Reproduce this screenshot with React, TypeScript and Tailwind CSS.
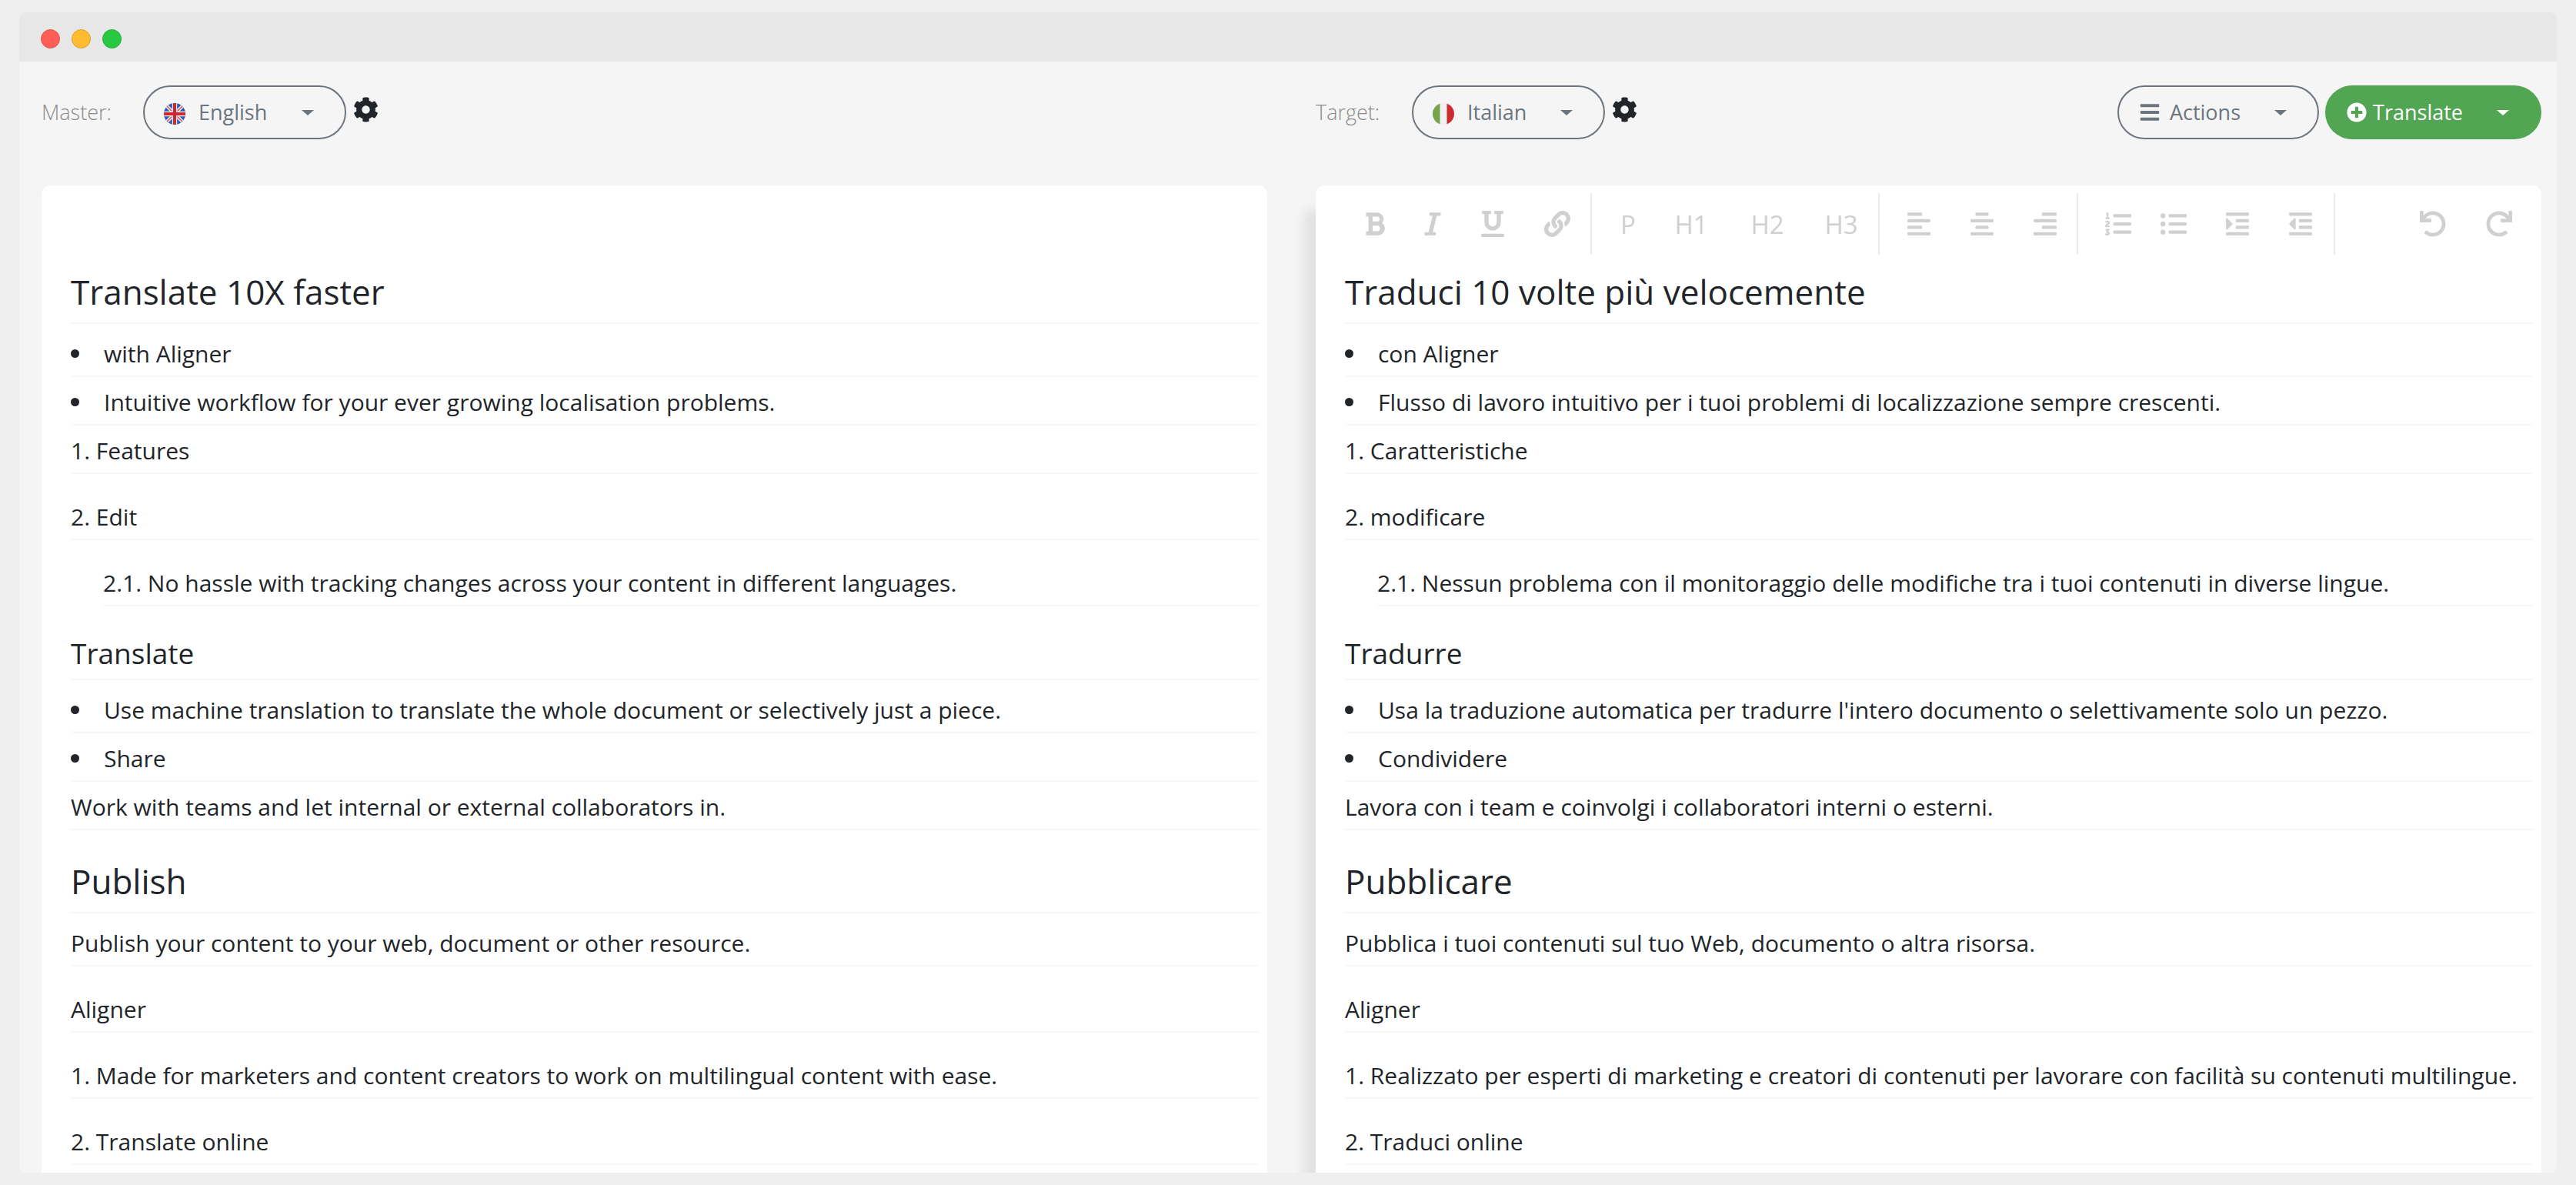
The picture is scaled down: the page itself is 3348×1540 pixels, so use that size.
import { FaBold, FaItalic, FaUnderline, FaLink, FaAlignLeft, FaAlignCenter, FaAlignRight, FaListOl, FaListUl, FaIndent, FaOutdent, FaUndo, FaRedo, FaCog, FaBars, FaPlusCircle } from "react-icons/fa";
import type { ReactNode } from "react";

type Row = { kind: "h1" | "h2" | "bullet" | "para" | "sub"; text: string; gap: "none" | "small" | "medium" | "large" };

const kinds: Pick<Row, "kind" | "gap">[] = [
  { kind: "h1", gap: "none" },
  { kind: "bullet", gap: "small" },
  { kind: "bullet", gap: "none" },
  { kind: "para", gap: "none" },
  { kind: "para", gap: "medium" },
  { kind: "sub", gap: "medium" },
  { kind: "h2", gap: "large" },
  { kind: "bullet", gap: "small" },
  { kind: "bullet", gap: "none" },
  { kind: "para", gap: "none" },
  { kind: "h1", gap: "large" },
  { kind: "para", gap: "small" },
  { kind: "para", gap: "medium" },
  { kind: "para", gap: "medium" },
  { kind: "para", gap: "medium" },
];

const english = [
  "Translate 10X faster",
  "with Aligner",
  "Intuitive workflow for your ever growing localisation problems.",
  "1. Features",
  "2. Edit",
  "2.1. No hassle with tracking changes across your content in different languages.",
  "Translate",
  "Use machine translation to translate the whole document or selectively just a piece.",
  "Share",
  "Work with teams and let internal or external collaborators in.",
  "Publish",
  "Publish your content to your web, document or other resource.",
  "Aligner",
  "1. Made for marketers and content creators to work on multilingual content with ease.",
  "2. Translate online",
];

const italian = [
  "Traduci 10 volte più velocemente",
  "con Aligner",
  "Flusso di lavoro intuitivo per i tuoi problemi di localizzazione sempre crescenti.",
  "1. Caratteristiche",
  "2. modificare",
  "2.1. Nessun problema con il monitoraggio delle modifiche tra i tuoi contenuti in diverse lingue.",
  "Tradurre",
  "Usa la traduzione automatica per tradurre l'intero documento o selettivamente solo un pezzo.",
  "Condividere",
  "Lavora con i team e coinvolgi i collaboratori interni o esterni.",
  "Pubblicare",
  "Pubblica i tuoi contenuti sul tuo Web, documento o altra risorsa.",
  "Aligner",
  "1. Realizzato per esperti di marketing e creatori di contenuti per lavorare con facilità su contenuti multilingue.",
  "2. Traduci online",
];

const gapClass = { none: "", small: "mt-[6px]", medium: "mt-[23px]", large: "mt-9" };

function Line({ kind, gap, text }: Row) {
  const base = `border-b-2 border-[#f7f7f7] ${gapClass[gap]}`;
  if (kind === "h1") return <h1 className={`${base} pb-[10px] text-[44px] leading-[60px]`}>{text}</h1>;
  if (kind === "h2") return <h2 className={`${base} pb-2 text-[37px] leading-[50px]`}>{text}</h2>;
  if (kind === "bullet")
    return (
      <p className={`${base} flex items-center pt-[11px] pb-[7px] text-[30px] leading-[43px]`}>
        <span className="mr-8 size-[11px] rounded-full bg-[#212529]" />
        {text}
      </p>
    );
  return <p className={`${base} ${kind === "sub" ? "ml-[42px]" : ""} pt-[11px] pb-[7px] text-[30px] leading-[43px]`}>{text}</p>;
}

function Document({ lines }: { lines: string[] }) {
  return (
    <div className="pr-[11px] pl-[38px]">
      {kinds.map((k, i) => (
        <Line key={i} kind={k.kind} gap={k.gap} text={lines[i]} />
      ))}
    </div>
  );
}

function Caret() {
  return <span className="pointer-events-none border-x-8 border-t-[7px] border-x-transparent border-t-current" />;
}

function UkFlag() {
  return (
    <svg viewBox="0 0 28 28" className="mt-1 size-7 shrink-0" aria-hidden="true">
      <clipPath id="uk"><circle cx="14" cy="14" r="14" /></clipPath>
      <g clipPath="url(#uk)">
        <rect width="28" height="28" fill="#2a5cb0" />
        <path d="M2 2l24 24M26 2L2 26" stroke="#f4f4f4" strokeWidth="4.4" />
        <path d="M2 2l24 24M26 2L2 26" stroke="#d8515c" strokeWidth="1.6" />
        <path d="M14 0v28M0 14h28" stroke="#f4f4f4" strokeWidth="6.4" />
        <path d="M14 0v28M0 14h28" stroke="#d0252e" strokeWidth="4" />
      </g>
    </svg>
  );
}

function ItalianFlag() {
  return (
    <svg viewBox="0 0 28 28" className="mt-1 size-7 shrink-0" aria-hidden="true">
      <clipPath id="it"><circle cx="14" cy="14" r="14" /></clipPath>
      <g clipPath="url(#it)">
        <rect width="28" height="28" fill="#f1f1f1" />
        <rect width="9.5" height="28" fill="#76a44d" />
        <rect x="18.5" width="9.5" height="28" fill="#cc2b34" />
      </g>
    </svg>
  );
}

function LanguagePicker({ id, label, value, flag, labelWidth, width }: { id: string; label: string; value: string; flag: ReactNode; labelWidth: string; width: string }) {
  return (
    <div className="flex items-center">
      <label htmlFor={id} className={`text-[27px] font-light text-[#8c8c8c] ${labelWidth}`}>{label}</label>
      <div className="relative flex h-[70px] items-center rounded-full border-2 border-[#6c757d] pl-[25px] text-[#6c757d]">
        {flag}
        <select id={id} defaultValue={value} className={`h-full appearance-none pl-[17px] text-[27px] outline-none ${width}`}>
          <option>English</option>
          <option>Italian</option>
        </select>
        <span className="pointer-events-none absolute right-10 flex"><Caret /></span>
      </div>
      <button aria-label={`${value} settings`} className="ml-[7px] px-0.5 pb-2 text-[33px] text-[#212529]"><FaCog /></button>
    </div>
  );
}

function Tool({ label, width, children }: { label: string; width: string; children: ReactNode }) {
  return <button aria-label={label} className={`flex h-full items-center justify-center ${width}`}>{children}</button>;
}

function Toolbar() {
  return (
    <div className="flex h-20 items-center text-[34px] text-[#d0d0d0]">
      <div className="flex h-full items-center border-r-2 border-[#ebebeb] pl-[40px]">
        <Tool label="Bold" width="w-[74px]"><FaBold /></Tool>
        <Tool label="Italic" width="w-[75px]"><FaItalic /></Tool>
        <Tool label="Underline" width="w-[81px]"><FaUnderline /></Tool>
        <Tool label="Link" width="w-[87px]"><FaLink /></Tool>
      </div>
      <div className="flex h-full items-center border-r-2 border-[#ebebeb] pt-0.5 pr-[10px] pl-[6px] text-[33px]">
        <Tool label="Paragraph" width="w-[82px]">P</Tool>
        <Tool label="Heading 1" width="w-[82px]">H1</Tool>
        <Tool label="Heading 2" width="w-[116px]">H2</Tool>
        <Tool label="Heading 3" width="w-[76px]">H3</Tool>
      </div>
      <div className="flex h-full items-center border-r-2 border-[#ebebeb] pl-[10px]">
        <Tool label="Align left" width="w-[82px]"><FaAlignLeft /></Tool>
        <Tool label="Align center" width="w-[82px]"><FaAlignCenter /></Tool>
        <Tool label="Align right" width="w-[82px]"><FaAlignRight /></Tool>
      </div>
      <div className="flex h-full items-center border-r-2 border-[#ebebeb] pr-2 pl-4">
        <Tool label="Numbered list" width="w-[72px]"><FaListOl /></Tool>
        <Tool label="Bulleted list" width="w-[72px]"><FaListUl /></Tool>
        <Tool label="Indent" width="w-[94px]"><FaIndent /></Tool>
        <Tool label="Outdent" width="w-[70px]"><FaOutdent /></Tool>
      </div>
      <div className="ml-auto flex h-full items-center pr-[12px]">
        <Tool label="Undo" width="w-[86px]"><FaUndo /></Tool>
        <Tool label="Redo" width="w-[86px]"><FaRedo /></Tool>
      </div>
    </div>
  );
}

export default function App() {
  return (
    <div className="h-screen bg-[#efefef] px-[25px] py-4 font-['Open_Sans',sans-serif] text-[#212529]">
      <div className="flex h-full flex-col overflow-hidden rounded-lg bg-[#f5f5f5]">
        <div className="flex h-16 shrink-0 items-center gap-[15px] bg-[#e7e7e7] px-[28px] pt-1">
          <span className="size-[25px] rounded-full border border-[#e2544c] bg-[#ff5f57]" />
          <span className="size-[25px] rounded-full border border-[#e0a032] bg-[#febc2e]" />
          <span className="size-[25px] rounded-full border border-[#24b03a] bg-[#28c840]" />
        </div>
        <header className="grid shrink-0 grid-cols-2 gap-[63px] px-[29px] pt-[31px] pr-5 pb-[60px]">
          <LanguagePicker id="master" label="Master:" value="English" flag={<UkFlag />} labelWidth="w-[132px]" width="w-[207px]" />
          <div className="flex items-center justify-between">
            <LanguagePicker id="target" label="Target:" value="Italian" flag={<ItalianFlag />} labelWidth="w-[125px]" width="w-[194px]" />
            <div className="flex gap-2 text-[27px]">
              <button className="flex h-[70px] items-center rounded-full border-2 border-[#6c757d] pr-10 pl-[26px] text-[#6c757d]">
                <FaBars className="mr-3 text-[28px]" />
                Actions
                <span className="ml-11 flex"><Caret /></span>
              </button>
              <button className="flex h-[70px] items-center rounded-full bg-[#52a552] pr-[42px] pl-[28px] text-white">
                <FaPlusCircle className="mr-2 text-[26px]" />
                Translate
                <span className="ml-11 flex"><Caret /></span>
              </button>
            </div>
          </div>
        </header>
        <main className="grid min-h-0 flex-1 grid-cols-2 gap-[63px] pr-5 pl-[29px]">
          <section aria-label="Master document" className="rounded-t-xl bg-white pt-[108px]">
            <Document lines={english} />
          </section>
          <section aria-label="Target document" className="rounded-t-xl bg-white pt-[10px] shadow-[-16px_30px_14px_0px_rgba(0,0,0,0.08)]">
            <Toolbar />
            <div className="pt-[18px]"><Document lines={italian} /></div>
          </section>
        </main>
      </div>
    </div>
  );
}
